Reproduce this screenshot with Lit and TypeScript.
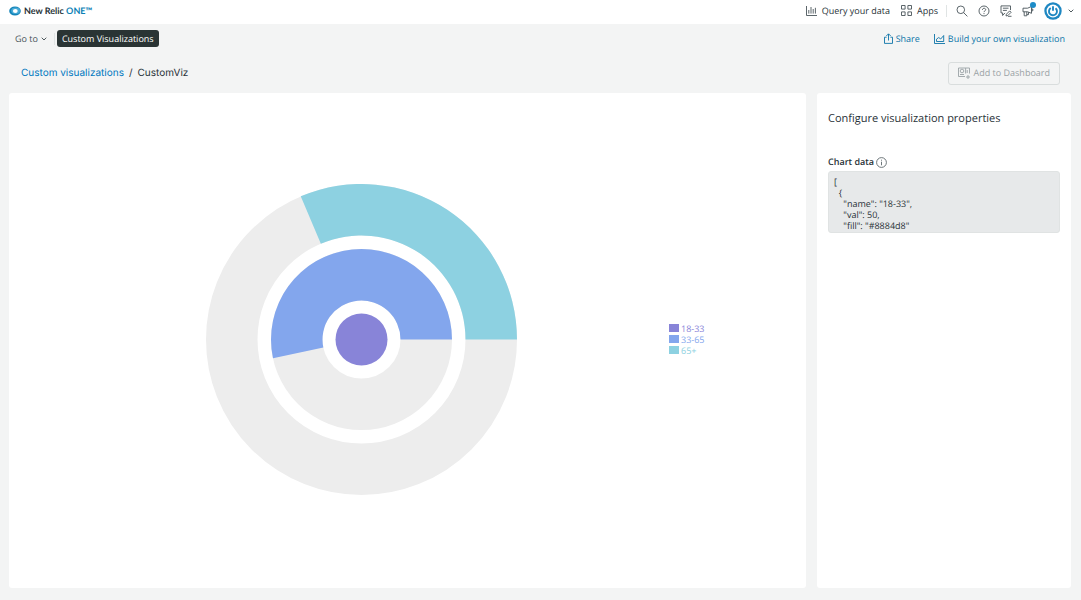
import { LitElement, html, svg, css } from "lit";
import { customElement, property } from "lit/decorators.js";

interface Ring {
  name: string;
  fill: string;
  inner: number;
  outer: number;
  sweep: number;
}

const RINGS: Ring[] = [
  { name: "18-33", fill: "#8884d8", inner: 0, outer: 26, sweep: 360 },
  { name: "33-65", fill: "#83a6ed", inner: 39, outer: 90.5, sweep: 192 },
  { name: "65+", fill: "#8dd1e1", inner: 104, outer: 155.5, sweep: 113 },
];

const CHART_DATA = `[
  {
    "name": "18-33",
    "val": 50,
    "fill": "#8884d8"
  },
  {
    "name": "33-65",
    "val": 26,
    "fill": "#83a6ed"
  },
  {
    "name": "65+",
    "val": 15,
    "fill": "#8dd1e1"
  }
]`;

function point(radius: number, degrees: number): string {
  const a = (degrees * Math.PI) / 180;
  return `${(radius * Math.cos(a)).toFixed(2)} ${(-radius * Math.sin(a)).toFixed(2)}`;
}

function sector({ inner, outer, sweep }: Ring): string {
  const large = sweep > 180 ? 1 : 0;
  return [
    `M${point(outer, 0)}`,
    `A${outer} ${outer} 0 ${large} 0 ${point(outer, sweep)}`,
    `L${point(inner, sweep)}`,
    `A${inner} ${inner} 0 ${large} 1 ${point(inner, 0)}Z`,
  ].join("");
}

@customElement("radial-chart")
export class RadialChart extends LitElement {
  @property({ attribute: false }) rings: Ring[] = [];

  static styles = css`
    :host { display: flex; align-items: center; flex: 1; padding: 0 102px 3px 45px; }
    .plot { flex: 1; display: flex; justify-content: center; min-width: 0; }
    .plot svg { width: 311px; max-width: 100%; display: block; }
    .legend { list-style: none; margin: 0; padding: 0; width: 35px; font-size: 9px; line-height: 11px; }
    .item { display: flex; align-items: center; gap: 2px; white-space: nowrap; }
    .swatch { width: 10px; height: 8px; flex: none; }
  `;

  render() {
    return html`
      <div class="plot">
        <svg viewBox="-155.5 -155.5 311 311" role="img" aria-label="Radial bar chart by age group">
          ${this.rings.map((r) =>
            r.sweep >= 360
              ? svg`<circle r=${r.outer} fill=${r.fill} />`
              : svg`
                <circle r=${(r.inner + r.outer) / 2} fill="none" stroke="#ededed" stroke-width=${r.outer - r.inner} />
                <path d=${sector(r)} fill=${r.fill} />`
          )}
        </svg>
      </div>
      <ul class="legend">
        ${this.rings.map(
          (r) => html`<li class="item" style="color:${r.fill}">
            <span class="swatch" style="background:${r.fill}"></span>${r.name}
          </li>`
        )}
      </ul>
    `;
  }
}

const chevron = html`<svg class="chevron" viewBox="0 0 6 4" width="6" height="4"><path d="M.7.7 3 3 5.3.7" /></svg>`;

@customElement("app-root")
export class AppRoot extends LitElement {
  static styles = css`
    :host {
      display: flex; flex-direction: column; min-height: 100vh; box-sizing: border-box;
      background: #f3f4f4; color: #293338;
      font-family: "Open Sans", sans-serif; font-size: 9px; line-height: 12px;
      text-rendering: geometricPrecision;
    }
    * { box-sizing: border-box; }
    svg { display: block; fill: none; stroke: currentColor; stroke-width: .9; flex: none; }
    a { color: inherit; text-decoration: none; }
    button { font: inherit; text-rendering: inherit; color: inherit; background: none; border: 0; padding: 0; margin: 0; display: flex; align-items: center; white-space: nowrap; }
    .top { display: flex; align-items: center; justify-content: space-between; height: 24px; padding: 0 7px 3px 9px; background: #fff; }
    .brand { display: flex; align-items: center; gap: 3px; font-family: Lato, sans-serif; font-weight: 700; white-space: nowrap; }
    .logo { stroke: none; }
    .one { color: #0b7fb5; }
    .tools { display: flex; align-items: center; }
    .tools svg { color: #49555a; }
    .query { gap: 5px; }
    .apps { gap: 5px; margin-left: 11px; }
    .rule { width: 1px; height: 12px; background: #e0e4e4; }
    .tools .rule { margin: 0 9px 0 8px; }
    .icons { display: flex; align-items: center; gap: 10px; }
    .bell { position: relative; }
    .dot { position: absolute; top: -3px; right: -2px; width: 6px; height: 6px; border-radius: 50%; background: #1d8cc8; }
    .account { gap: 6px; }
    .chevron { stroke: #3c484d; }
    .nav { display: flex; align-items: center; justify-content: space-between; height: 29px; padding: 0 16px 0 15px; }
    .crumbs, .actions { display: flex; align-items: center; }
    .goto { gap: 3px; color: #4b565b; }
    .nav .rule { margin: 0 2px 0 7px; }
    .pill { height: 17px; padding: 0 5px; border-radius: 3px; background: #2a3434; color: #fff; line-height: 17px; }
    .actions { gap: 14px; color: #0c74a8; }
    .share, .build { display: flex; align-items: center; gap: 3px; white-space: nowrap; }
    .heading { display: flex; align-items: center; justify-content: space-between; height: 40px; padding: 0 21px; }
    .path { display: flex; gap: 5px; font-family: Inter, sans-serif; font-size: 10px; }
    .path a { color: #0078bf; }
    .add { height: 23px; padding: 0 9px; gap: 4px; border: 1px solid #d9dddd; border-radius: 3px; color: #9ba3a6; }
    .main { flex: 1; display: grid; grid-template-columns: minmax(0, 797fr) minmax(0, 254fr); gap: 11px; padding: 0 10px 12px 9px; }
    .panel { background: #fff; border-radius: 3px; display: flex; flex-direction: column; min-width: 0; }
    .config { padding: 18px 11px; }
    .title { margin: 0; font-size: 11px; line-height: 16px; font-weight: 400; }
    .field { display: flex; align-items: center; gap: 2px; margin-top: 28px; height: 14px; font-weight: 600; }
    .field svg { color: #5d686c; }
    .code {
      display: block; width: 100%; height: 62px; margin: 2px 0 0; padding: 4px 5px; border: 1px solid #e0e3e3; border-radius: 3px;
      background: #e7e9ea; color: #293338; font-family: "Open Sans", sans-serif; font-size: 9px; line-height: 11px;
      text-rendering: inherit; resize: none; overflow: hidden; white-space: pre; outline: 0;
    }
  `;

  render() {
    return html`
      <header class="top">
        <a class="brand" href="#">
          <svg class="logo" width="12" height="10" viewBox="0 0 12 10">
            <ellipse cx="6" cy="5" rx="5.8" ry="4.6" fill="#1283b8" />
            <ellipse cx="6.6" cy="4.8" rx="4.4" ry="3.3" fill="#45a9d6" />
            <ellipse cx="6.3" cy="5" rx="2.4" ry="1.9" fill="#fff" />
          </svg>
          <span>New Relic <span class="one">ONE™</span></span>
        </a>
        <div class="tools">
          <button class="query">
            <svg width="11" height="10" viewBox="0 0 11 10">
              <path d="M.5 0v9.5H11M2.8 4v3.6M5 1v6.6M7.2 3v4.6M9.4 1.8v5.8" />
            </svg>Query your data
          </button>
          <button class="apps">
            <svg width="11" height="11" viewBox="0 0 11 11">
              <path d="M.5.5h3.6v3.6H.5zM6.9.5h3.6v3.6H6.9zM.5 6.9h3.6v3.6H.5zM6.9 6.9h3.6v3.6H6.9z" />
            </svg>Apps
          </button>
          <span class="rule"></span>
          <div class="icons">
            <button aria-label="Search">
              <svg width="12" height="12" viewBox="0 0 12 12"><circle cx="4.8" cy="4.8" r="3.8" /><path d="m7.6 7.6 3.8 3.8" /></svg>
            </button>
            <button aria-label="Help">
              <svg width="12" height="12" viewBox="0 0 12 12">
                <circle cx="6" cy="6" r="5" /><path d="M4.4 4.9c0-2.2 3.3-2.1 3.3-.2C7.7 5.9 6 5.8 6 7.1M6 8.1v1" />
              </svg>
            </button>
            <button aria-label="Feedback">
              <svg width="12" height="12" viewBox="0 0 12 12">
                <path d="M10.5 5V.9H1v7h1.6v2.6L5 7.9M2.9 3.2h5.6M2.9 5.4h4M6 10.9l.4-1.7 3.3-3.3 1.4 1.4-3.3 3.3zM8 11.3h3.5" />
              </svg>
            </button>
            <button class="bell" aria-label="What's new">
              <svg width="12" height="12" viewBox="0 0 12 12">
                <path d="M1 3.2h4.6l3.9-1.7v6.8L5.6 6.8H1zM2.2 6.8v4h2.6v-4M4.8 9.6h1.7V7.2M9.5 4h1.3v1.8H9.5" />
              </svg>
              <span class="dot"></span>
            </button>
            <button class="account" aria-label="Account">
              <svg width="18" height="18" viewBox="0 0 18 18">
                <circle cx="9" cy="9" r="8.7" fill="#1e87c2" stroke="none" />
                <circle cx="9" cy="9" r="6.4" fill="#fff" stroke="none" />
                <path d="M6.7 6a4 4 0 1 0 4.8.2M9 4.2v4.6" stroke="#1e87c2" stroke-width="1.9" />
              </svg>
              ${chevron}
            </button>
          </div>
        </div>
      </header>
      <nav class="nav">
        <div class="crumbs">
          <button class="goto">Go to ${chevron}</button>
          <span class="rule"></span>
          <button class="pill">Custom Visualizations</button>
        </div>
        <div class="actions">
          <button class="share">
            <svg width="9" height="11" viewBox="0 0 9 11"><path d="M2.6 4.2H.5v6.2h8V4.2H6.4M4.5 7.5V1M2.3 3l2.2-2.2L6.7 3" /></svg>Share
          </button>
          <a class="build" href="#">
            <svg width="11" height="10" viewBox="0 0 11 10"><path d="M.5 0v9.5H11M2.5 7.5V5.2l2.2-1.700 2 1.500 3-3.500v6z" /></svg>Build your own visualization
          </a>
        </div>
      </nav>
      <div class="heading">
        <div class="path"><a href="#">Custom visualizations</a><span>/</span><span>CustomViz</span></div>
        <button class="add">
          <svg width="12" height="12" viewBox="0 0 12 12">
            <path d="M7 9.5H.5V1H11.5v5.5M7.6 1v5.5M2 7.5h4M9.2 3v3M10 8v4M8 10h4" /><circle cx="4" cy="4" r="1.8" />
          </svg>Add to Dashboard
        </button>
      </div>
      <main class="main">
        <section class="panel"><radial-chart .rings=${RINGS}></radial-chart></section>
        <aside class="panel config">
          <h2 class="title">Configure visualization properties</h2>
          <div class="field">
            <label for="chart-data">Chart data</label>
            <svg width="11" height="11" viewBox="0 0 11 11"><circle cx="5.5" cy="5.5" r="4.9" /><path d="M5.5 2.7v1M5.5 4.7v3.6" /></svg>
          </div>
          <textarea class="code" id="chart-data" spellcheck="false" .value=${CHART_DATA}></textarea>
        </aside>
      </main>
    `;
  }
}
